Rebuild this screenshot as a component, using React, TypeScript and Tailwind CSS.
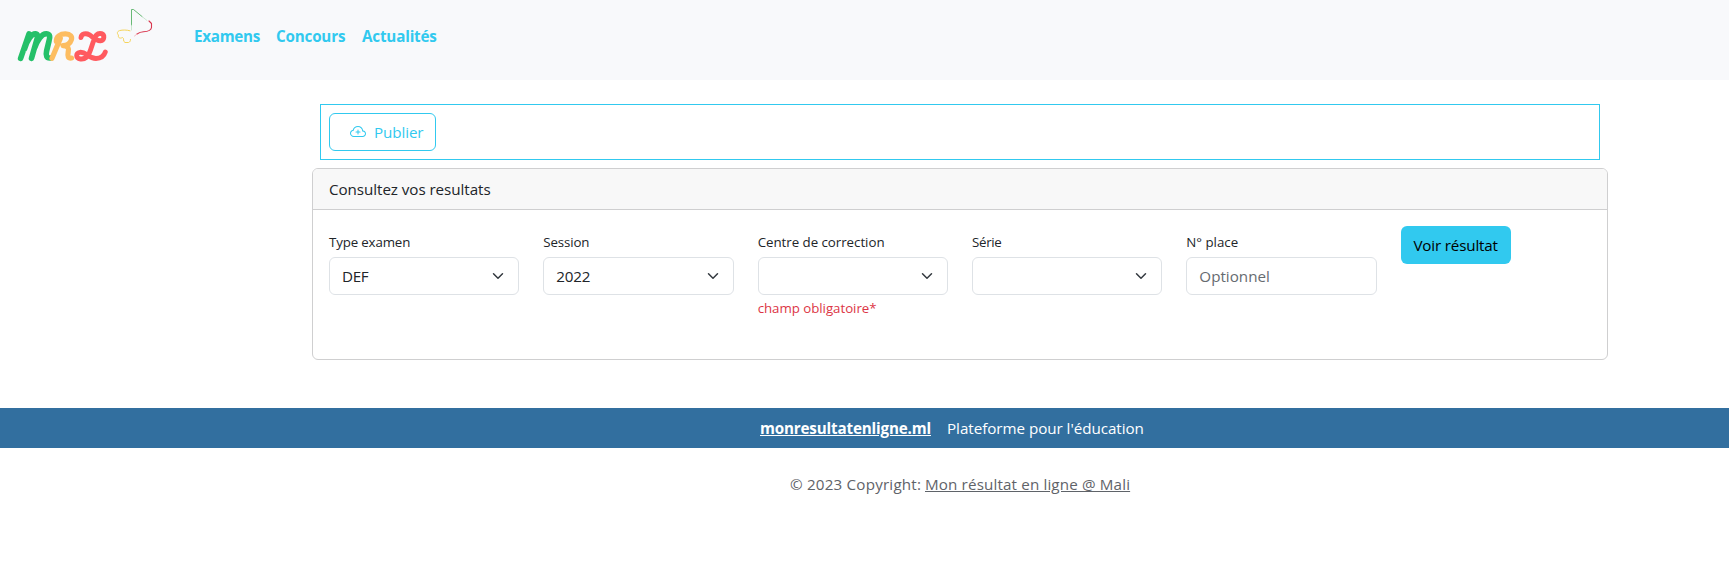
import React from "react";
import { BsCloudPlus } from "react-icons/bs";

function Logo() {
  return (
    <svg width="170" height="80" viewBox="0 0 170 80" fill="none" strokeLinecap="round" strokeLinejoin="round" className="block shrink-0">
      <g strokeWidth="5.6">
        <path stroke="#25c069" d="M20.6 58.3L29 34M24.5 49C27 40 32 33.500 35.500 33.800C38 34.200 37.800 36.500 37 39L31.500 58.300M34 49.500C37 40 42 33.500 46.500 33.800C50.500 34.200 50 37.500 49 41L46.600 51C45.600 55.500 46.500 58.500 50.500 58" />
        <path stroke="#fdbd61" strokeWidth="5.2" d="M52 58.300L60.300 38.500M56.300 41.500C56 36.500 60.500 33.800 65.500 33.900C70.500 34 72.500 36.500 71.300 40C70 44 66.500 45.500 63 45.700C68.500 46 69 48.500 68.200 52C67.400 56.500 68 58.300 71.500 58" />
        <path stroke="#ff5a5f" strokeWidth="4.900" d="M81 37.500C81.500 33.500 86 32.800 89.500 34.800C93 37.200 96 41.200 100.500 40.800C104.500 40.300 105 34.800 101.500 33.600C97 32.500 94.800 36.500 93.500 41L90.500 50C88.500 56.500 85 59.500 80.500 59C75.500 58.300 75.500 53 80 52.300C86 51.500 88.500 58.600 96 58.500C101 58.400 104 56 105.300 52" />
      </g>
      <path stroke="#4fae5e" strokeWidth="1" opacity=".85" d="M131.500 25V9.500H133.500L142 16.500" />
      <path stroke="#a9d8ae" strokeWidth=".8" opacity=".7" d="M131.500 25V30M142 16.500L147 20.500" />
      <path stroke="#d9364e" strokeWidth="1.100" d="M149 21L151.500 23.500V27.500C151 31 147 31.600 143.500 31.800C140 32 138.500 33 137 34" />
      <path stroke="#f0a0a9" strokeWidth=".7" d="M137 34L134.500 36" />
      <path stroke="#f5d45a" strokeWidth="1" d="M130 30.800C127 29.800 122.500 29.800 119.500 30.600C117 31.500 116.800 33.500 118.500 35C117.800 37.500 119.500 39 122.500 37.500C124.500 38 122.500 41.500 125 42.500H128.500C130 42 130.500 41 130.500 39.500" />
    </svg>
  );
}

function Chevron() {
  return (
    <svg width="16" height="12" viewBox="0 0 16 16" preserveAspectRatio="xMidYMid meet" fill="none" className="shrink-0">
      <path stroke="#343a40" strokeLinecap="round" strokeLinejoin="round" strokeWidth="2" d="m2 5 6 6 6-6" />
    </svg>
  );
}

function Field({ label, error, children }: { label: React.ReactNode; error?: React.ReactNode; children: React.ReactNode }) {
  return (
    <div className="pt-[6px]">
      <div className="mb-1 h-[21px] whitespace-nowrap text-[13.3px] leading-[21px]">{label}</div>
      <div className="flex h-[38px] items-center justify-between rounded-md border border-[#dee2e6] bg-white px-3">{children}</div>
      {error}
    </div>
  );
}

export default function App() {
  return (
    <div className="min-h-[562px] overflow-hidden bg-white font-['Open_Sans','Noto_Sans',sans-serif] text-[15.2px] leading-6 text-[#212529]">
      <header className="flex h-20 bg-[#f8f9fb]">
        <Logo />
        <nav className="flex gap-4 pt-6 pl-6 font-bold whitespace-nowrap text-[#31c9ef]">
          <a className="w-[66px] tracking-[-0.25px]">Examens</a>
          <a className="w-[70px] tracking-[-0.18px]">Concours</a>
          <a className="tracking-[-0.17px]">Actualités</a>
        </nav>
      </header>

      <main className="ml-[312px] w-[1296px] pt-6">
        <section className="mx-2 mb-2 flex h-14 items-center border border-[#31c9ef] px-2">
          <button className="flex h-[38px] w-[107px] items-center rounded-md border border-[#31c9ef] pl-5 whitespace-nowrap text-[#31c9ef]">
            <BsCloudPlus size={16} />
            <span className="ml-2 tracking-[-0.1px]">Publier</span>
          </button>
        </section>

        <section className="h-48 overflow-hidden rounded-md border border-[#cfcfd0]">
          <h2 className="h-[41px] border-b border-[#cfcfd0] bg-[#f8f8f8] px-4 py-2 tracking-[-0.06px]">Consultez vos resultats</h2>
          <form className="grid grid-cols-6 gap-x-6 p-4">
            <Field label={<span className="tracking-[-0.15px]">Type examen</span>}>
              <span className="tracking-[-0.3px]">DEF</span>
              <Chevron />
            </Field>
            <Field label={<span className="tracking-[-0.14px]">Session</span>}>
              <span className="tracking-[-0.19px]">2022</span>
              <Chevron />
            </Field>
            <Field
              label={<span className="tracking-[-0.03px]">Centre de correction</span>}
              error={<p className="mt-[3px] text-[13.3px] leading-[21px] tracking-[-0.04px] whitespace-nowrap text-[#dc3545]">champ obligatoire*</p>}
            >
              <span />
              <Chevron />
            </Field>
            <Field label={<span className="tracking-[-0.29px]">Série</span>}>
              <span />
              <Chevron />
            </Field>
            <Field label="N° place">
              <span className="text-[#666b70]">Optionnel</span>
            </Field>
            <div>
              <button type="button" className="h-[38px] w-[110px] rounded-md bg-[#31c9ef] tracking-[-0.17px] whitespace-nowrap text-black">
                Voir résultat
              </button>
            </div>
          </form>
        </section>
      </main>

      <footer className="mt-12">
        <div className="flex h-10 gap-4 bg-[#326f9f] py-2 pl-[760px] whitespace-nowrap text-white">
          <a className="w-[171px] font-bold tracking-[-0.16px] underline">monresultatenligne.ml</a>
          <span className="tracking-[-0.04px]">Plateforme pour l'éducation</span>
        </div>
        <p className="flex pt-6 pl-[790px] whitespace-nowrap text-[#5f6369]">
          <span className="w-[135px] tracking-[0.19px]">© 2023 Copyright:</span>
          <a className="tracking-[0.14px] underline">Mon résultat en ligne @ Mali</a>
        </p>
      </footer>
    </div>
  );
}
